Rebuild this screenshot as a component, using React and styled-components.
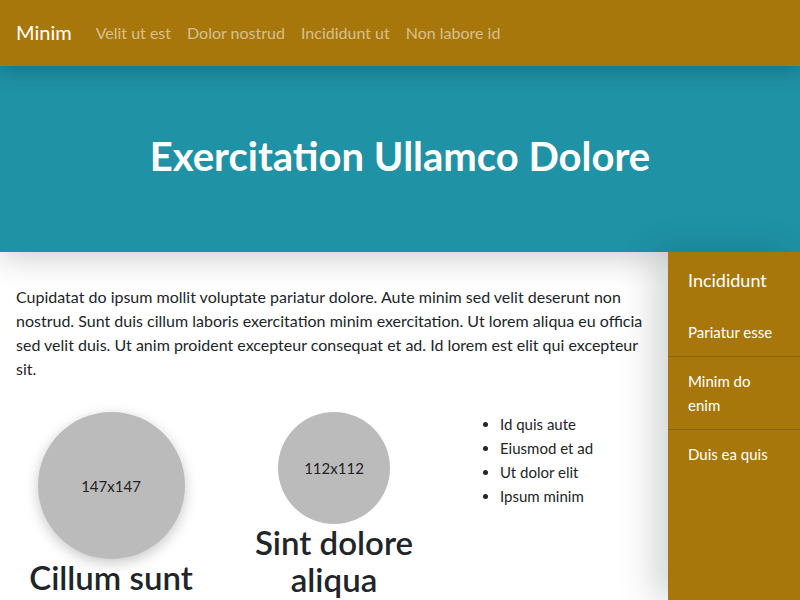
import React from 'react';
import styled, { createGlobalStyle } from 'styled-components';

const Global = createGlobalStyle`
  html, body { margin: 0; padding: 0; }
  body {
    font-family: Lato, "Open Sans", sans-serif;
    color: #212529;
    background: #fff;
  }
`;

const Page = styled.div`
  display: flex;
  flex-direction: column;
  min-height: 100vh;
  overflow: hidden;
`;

const Navbar = styled.nav`
  height: 66px;
  padding: 0 16px 2px;
  box-sizing: border-box;
  background: #a8770b;
  display: flex;
  align-items: center;
  box-shadow: 0 4px 20px rgba(0, 0, 0, 0.25);
  position: relative;
  z-index: 3;
`;

const Brand = styled.div`
  color: #fff;
  font-size: 20px;
  margin-right: 16px;
`;

const NavLink = styled.a`
  color: rgba(255, 255, 255, 0.55);
  font-size: 16px;
  padding: 0 8px;
  text-decoration: none;
`;

const Hero = styled.header`
  height: 186px;
  padding-bottom: 6px;
  box-sizing: border-box;
  background: #1f92a6;
  display: flex;
  align-items: center;
  justify-content: center;
  box-shadow: 0 6px 30px rgba(0, 0, 0, 0.2);
  position: relative;
  z-index: 1;
`;

const HeroTitle = styled.h1`
  margin: 0;
  color: #fff;
  font-size: 40px;
  font-weight: 700;
`;

const Body = styled.div`
  flex: 1;
  display: flex;
`;

const Main = styled.main`
  flex: 1;
  padding: 33px 16px 0;
`;

const Lead = styled.p`
  margin: 0 0 31px;
  font-size: 16px;
  line-height: 24px;
`;

const Columns = styled.div`
  display: grid;
  grid-template-columns: repeat(3, 1fr);
  column-gap: 33px;
`;

const Feature = styled.div`
  display: flex;
  flex-direction: column;
  align-items: center;
  text-align: center;
`;

const Avatar = styled.div`
  width: ${p => p.size}px;
  height: ${p => p.size}px;
  border-radius: 50%;
  background: #bbbbbb;
  color: #222;
  font-size: 15px;
  display: flex;
  align-items: center;
  justify-content: center;
  box-shadow: ${p => (p.raised ? '0 4px 14px rgba(0, 0, 0, 0.22)' : 'none')};
`;

const FeatureTitle = styled.h2`
  margin: 0;
  font-size: 33px;
  font-weight: 600;
  line-height: 37px;
`;

const List = styled.ul`
  margin: 0;
  padding-left: 38px;
  font-size: 15px;
  line-height: 24px;
`;

const Sidebar = styled.aside`
  width: 132px;
  background: #a8770b;
  color: #fff;
  box-shadow: -14px 0 34px rgba(0, 0, 0, 0.17);
  position: relative;
  z-index: 2;
`;

const SideTitle = styled.div`
  padding: 16px 20px;
  font-size: 18px;
  line-height: 24px;
`;

const SideItem = styled.div`
  padding: 12px 20px;
  font-size: 15px;
  line-height: 24px;
  border-bottom: ${p => (p.last ? 'none' : '1px solid #8c6309')};
`;

export default function App() {
  return (
    <Page>
      <Global />
      <Navbar>
        <Brand>Minim</Brand>
        <NavLink>Velit ut est</NavLink>
        <NavLink>Dolor nostrud</NavLink>
        <NavLink>Incididunt ut</NavLink>
        <NavLink>Non labore id</NavLink>
      </Navbar>
      <Hero>
        <HeroTitle>Exercitation Ullamco Dolore</HeroTitle>
      </Hero>
      <Body>
        <Main>
          <Lead>
            Cupidatat do ipsum mollit voluptate pariatur dolore. Aute minim sed velit deserunt non
            nostrud. Sunt duis cillum laboris exercitation minim exercitation. Ut lorem aliqua eu officia
            sed velit duis. Ut anim proident excepteur consequat et ad. Id lorem est elit qui excepteur
            sit.
          </Lead>
          <Columns>
            <Feature>
              <Avatar size={147} raised>147x147</Avatar>
              <FeatureTitle>Cillum sunt</FeatureTitle>
            </Feature>
            <Feature>
              <Avatar size={112}>112x112</Avatar>
              <FeatureTitle>Sint dolore aliqua</FeatureTitle>
            </Feature>
            <div>
              <List>
                <li>Id quis aute</li>
                <li>Eiusmod et ad</li>
                <li>Ut dolor elit</li>
                <li>Ipsum minim</li>
              </List>
            </div>
          </Columns>
        </Main>
        <Sidebar>
          <SideTitle>Incididunt</SideTitle>
          <SideItem>Pariatur esse</SideItem>
          <SideItem>Minim do enim</SideItem>
          <SideItem last>Duis ea quis</SideItem>
        </Sidebar>
      </Body>
    </Page>
  );
}
